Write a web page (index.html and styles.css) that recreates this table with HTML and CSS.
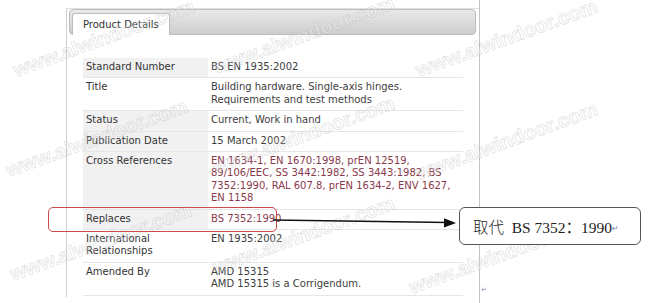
FILE: index.html
```html
<!DOCTYPE html>
<html>
<head>
<meta charset="utf-8">
<link rel="stylesheet" href="styles.css">
</head>
<body>
<div class="doc">
  <div class="panel">
    <div class="tabbar">
      <div class="tab">Product Details</div>
    </div>
    <div class="details">
      <div class="lbl shade">Standard Number</div>
      <div class="val">BS EN 1935:2002</div>

      <div class="lbl">Title</div>
      <div class="val">Building hardware. Single-axis hinges. Requirements and test methods</div>

      <div class="lbl shade">Status</div>
      <div class="val">Current, Work in hand</div>

      <div class="lbl shade">Publication Date</div>
      <div class="val">15 March 2002</div>

      <div class="lbl shade">Cross References</div>
      <div class="val link">EN 1634-1, EN 1670:1998, prEN 12519, 89/106/EEC, SS 3442:1982, SS 3443:1982, BS 7352:1990, RAL 607.8, prEN 1634-2, ENV 1627, EN 1158</div>

      <div class="lbl shade">Replaces</div>
      <div class="val link">BS 7352:1990</div>

      <div class="lbl">International Relationships</div>
      <div class="val">EN 1935:2002</div>

      <div class="lbl">Amended By</div>
      <div class="val">AMD 15315<br>AMD 15315 is a Corrigendum.</div>
    </div>
  </div>
</div>

<div class="wm wm1">www.alwindoor.com</div>
<div class="wm wm2">www.alwindoor.com</div>
<div class="wm wm3">www.alwindoor.com</div>
<div class="wm wm4">www.alwindoor.com</div>
<div class="wm wm5">www.alwindoor.com</div>
<div class="wm wm6">www.alwindoor.com</div>
<div class="wm wm7">www.alwindoor.com</div>
<div class="wm wm8">www.alwindoor.com</div>
<div class="wm wm9">www.alwindoor.com</div>

<div class="redbox"></div>
<svg class="arrow" width="190" height="20" viewBox="0 0 190 20">
  <line x1="3" y1="10" x2="178" y2="12.5" stroke="#111" stroke-width="1.4"/>
  <polygon points="186,13 174,8.3 174,17.5" fill="#111"/>
</svg>
<div class="callout"><span class="zh">取代</span><span class="en">&nbsp; BS 7352：1990</span><span class="ret">↵</span></div>
<div class="endmark">↵</div>
</body>
</html>
```

FILE: styles.css
```css
html, body {
  margin: 0;
  padding: 0;
  background: #ffffff;
}
body {
  position: relative;
  width: 650px;
  height: 303px;
  overflow: hidden;
  font-family: "DejaVu Sans", Verdana, sans-serif;
  font-size: 10px;
  color: #333;
}
.doc {
  width: 480px;
  height: 303px;
  box-sizing: border-box;
  border-right: 1px solid #c4c4c4;
  padding: 8px 0 0 66px;
}
.panel {
  height: 289px;
  box-sizing: border-box;
  border-left: 1px solid #cfcfcf;
  border-top: 1px solid #e2e2e2;
  padding: 0 3px 0 2px;
}
.tabbar {
  height: 26px;
  box-sizing: border-box;
  border: 1px solid #bdbdbd;
  border-radius: 4px;
  background: linear-gradient(#e9e9e9, #cdcdcd);
  display: flex;
  align-items: flex-end;
  padding-left: 2px;
}
.tab {
  height: 22px;
  line-height: 22px;
  margin-bottom: -1px;
  box-sizing: border-box;
  padding: 0 10px;
  background: #fff;
  border: 1px solid #bdbdbd;
  border-bottom: none;
  border-radius: 3px 3px 0 0;
  color: #333;
  font-size: 10px;
}
.details {
  margin: 23px 0 0 14px;
  width: 380px;
  display: grid;
  grid-template-columns: 125px 1fr;
  line-height: 12.4px;
}
.lbl, .val {
  padding: 3px 3px 4px;
  border-bottom: 1px solid #e6e6e6;
}
.lbl {
  color: #333;
}
.lbl.shade {
  background: #f1f1f1;
}
.val {
  color: #3e3e3e;
}
.val.link {
  color: #8a3a4c;
}

/* watermark */
.wm {
  position: absolute;
  font-family: "Liberation Sans", Arial, sans-serif;
  font-weight: bold;
  font-size: 20px;
  line-height: 20px;
  white-space: nowrap;
  color: rgba(255, 255, 255, 0.25);
  -webkit-text-stroke: 0.8px rgba(170, 170, 170, 0.35);
  transform: rotate(-20deg);
  transform-origin: left bottom;
  pointer-events: none;
}
.wm1 { left: 17px;  top: 60px; }
.wm2 { left: 10px;  top: 160px; }
.wm3 { left: 14px;  top: 264px; }
.wm4 { left: 217px; top: 57px; }
.wm5 { left: 217px; top: 157px; }
.wm6 { left: 217px; top: 257px; }
.wm7 { left: 420px; top: 60px; }
.wm8 { left: 420px; top: 163px; }
.wm9 { left: 413px; top: 277px; }

/* annotations */
.redbox {
  position: absolute;
  left: 48px;
  top: 207px;
  width: 229px;
  height: 25px;
  box-sizing: border-box;
  border: 1px solid #cf4a4a;
  border-radius: 5px;
}
.arrow {
  position: absolute;
  left: 270px;
  top: 210px;
}
.callout {
  position: absolute;
  left: 459px;
  top: 207px;
  width: 182px;
  height: 38px;
  box-sizing: border-box;
  border: 1px solid #555;
  border-radius: 6px;
  background: #fff;
  padding-left: 13px;
  display: flex;
  align-items: center;
  color: #222;
  font-size: 15.5px;
  white-space: nowrap;
}
.zh {
  font-family: "Noto Sans CJK SC", sans-serif;
  font-weight: 300;
}
.en {
  font-family: "Liberation Serif", "Noto Sans CJK SC", serif;
}
.ret {
  font-family: "DejaVu Sans", sans-serif;
  font-size: 8px;
  color: #6a7fa8;
  align-self: flex-end;
  margin-bottom: 11px;
}
.endmark {
  position: absolute;
  left: 481px;
  top: 286px;
  font-size: 7px;
  color: #8090aa;
}
```
